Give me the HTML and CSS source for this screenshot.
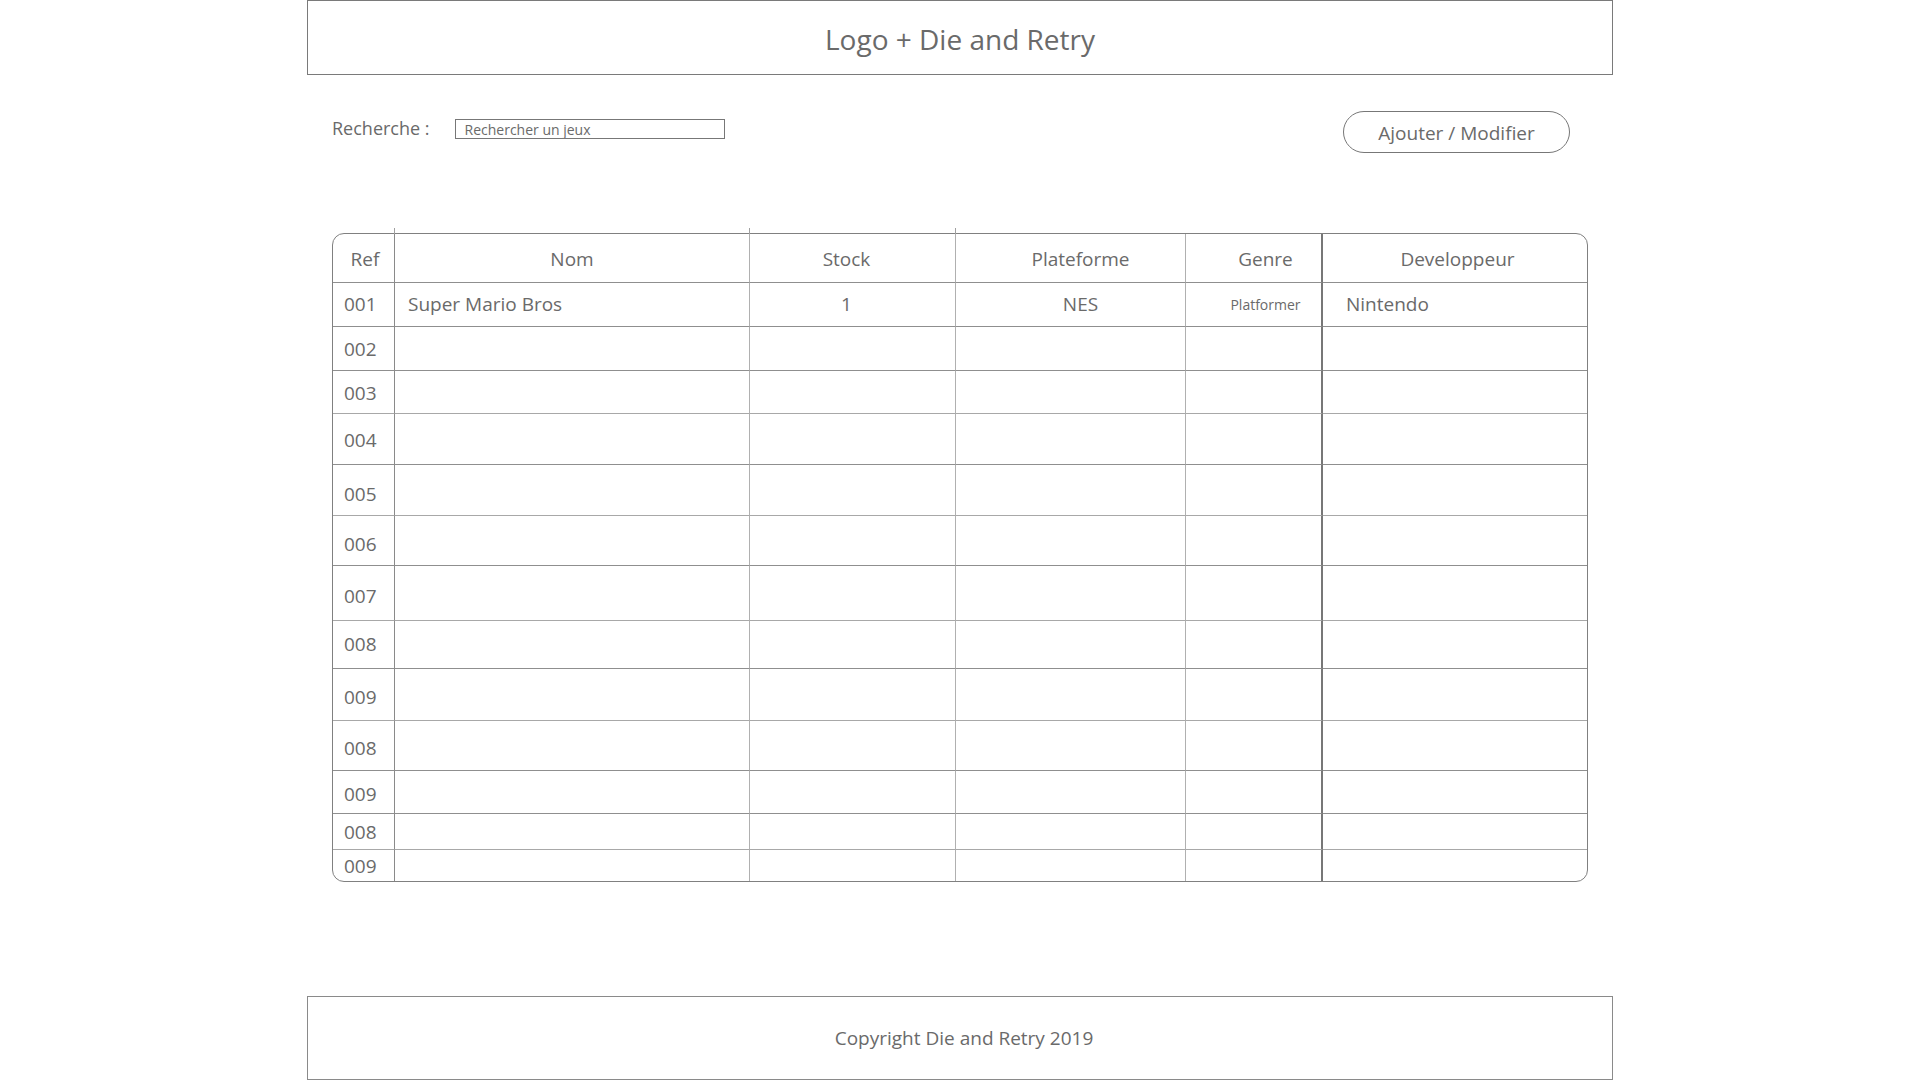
FILE: index.html
```html
<!DOCTYPE html>
<html lang="fr">
<head>
<meta charset="utf-8">
<title>Die and Retry</title>
<link rel="stylesheet" href="styles.css">
</head>
<body>
<div class="page">
  <header class="site-header">
    <h1 class="site-title">Logo + Die and Retry</h1>
  </header>

  <div class="toolbar">
    <div class="search">
      <label class="search-label" for="q">Recherche :</label>
      <input class="search-input" id="q" type="text" placeholder="Rechercher un jeux">
    </div>
    <button class="btn-edit" type="button">Ajouter / Modifier</button>
  </div>

  <div class="table-wrap">
    <table class="games">
      <colgroup>
        <col class="c-ref"><col class="c-nom"><col class="c-stock"><col class="c-plat"><col class="c-genre"><col class="c-dev">
      </colgroup>
      <thead>
        <tr>
          <th class="col-ref tick">Ref</th>
          <th class="col-nom tick">Nom</th>
          <th class="col-stock tick">Stock</th>
          <th class="col-plat">Plateforme</th>
          <th class="col-genre">Genre</th>
          <th class="col-dev">Developpeur</th>
        </tr>
      </thead>
      <tbody>
        <tr><td class="col-ref">001</td><td class="col-nom">Super Mario Bros</td><td class="col-stock">1</td><td class="col-plat">NES</td><td class="col-genre small">Platformer</td><td class="col-dev">Nintendo</td></tr>
        <tr><td class="col-ref">002</td><td class="col-nom"></td><td class="col-stock"></td><td class="col-plat"></td><td class="col-genre"></td><td class="col-dev"></td></tr>
        <tr class="light"><td class="col-ref">003</td><td class="col-nom"></td><td class="col-stock"></td><td class="col-plat"></td><td class="col-genre"></td><td class="col-dev"></td></tr>
        <tr><td class="col-ref">004</td><td class="col-nom"></td><td class="col-stock"></td><td class="col-plat"></td><td class="col-genre"></td><td class="col-dev"></td></tr>
        <tr class="light"><td class="col-ref">005</td><td class="col-nom"></td><td class="col-stock"></td><td class="col-plat"></td><td class="col-genre"></td><td class="col-dev"></td></tr>
        <tr><td class="col-ref">006</td><td class="col-nom"></td><td class="col-stock"></td><td class="col-plat"></td><td class="col-genre"></td><td class="col-dev"></td></tr>
        <tr class="light"><td class="col-ref">007</td><td class="col-nom"></td><td class="col-stock"></td><td class="col-plat"></td><td class="col-genre"></td><td class="col-dev"></td></tr>
        <tr><td class="col-ref">008</td><td class="col-nom"></td><td class="col-stock"></td><td class="col-plat"></td><td class="col-genre"></td><td class="col-dev"></td></tr>
        <tr class="light"><td class="col-ref">009</td><td class="col-nom"></td><td class="col-stock"></td><td class="col-plat"></td><td class="col-genre"></td><td class="col-dev"></td></tr>
        <tr><td class="col-ref">008</td><td class="col-nom"></td><td class="col-stock"></td><td class="col-plat"></td><td class="col-genre"></td><td class="col-dev"></td></tr>
        <tr><td class="col-ref">009</td><td class="col-nom"></td><td class="col-stock"></td><td class="col-plat"></td><td class="col-genre"></td><td class="col-dev"></td></tr>
        <tr class="light"><td class="col-ref">008</td><td class="col-nom"></td><td class="col-stock"></td><td class="col-plat"></td><td class="col-genre"></td><td class="col-dev"></td></tr>
        <tr><td class="col-ref">009</td><td class="col-nom"></td><td class="col-stock"></td><td class="col-plat"></td><td class="col-genre"></td><td class="col-dev"></td></tr>
      </tbody>
    </table>
  </div>

  <footer class="site-footer">Copyright Die and Retry 2019</footer>
</div>
</body>
</html>
```

FILE: styles.css
```css
* { box-sizing: border-box; }

html, body {
  margin: 0;
  padding: 0;
  background: #ffffff;
}

body {
  font-family: "Open Sans", "Noto Sans", "Liberation Sans", sans-serif;
  font-weight: 400;
  color: #6a6a6a;
}

.page {
  width: 1306px;
  margin: 0 auto;
}

/* Header */
.site-header {
  height: 75px;
  border: 1px solid #7a7a7a;
  display: flex;
  align-items: center;
  justify-content: center;
}

.site-title {
  margin: 0;
  font-size: 28px;
  font-weight: 400;
  color: #6a6a6a;
  line-height: 1;
  padding-top: 3px;
}

/* Toolbar */
.toolbar {
  margin-top: 36px;
  padding: 0 43px 0 25px;
  display: flex;
  justify-content: space-between;
  align-items: flex-start;
}

.search {
  margin-top: 8px;
  display: flex;
  align-items: center;
  gap: 25px;
}

.search-label {
  font-size: 18px;
  line-height: 20px;
  color: #6a6a6a;
  margin-top: -3px;
}

.search-input {
  width: 270px;
  height: 20px;
  margin: 0;
  padding: 0 9px;
  border: 1px solid #777777;
  border-radius: 0;
  font-family: inherit;
  font-weight: 400;
  font-size: 14px;
  line-height: 18px;
  color: #6a6a6a;
  outline: none;
  background: #fff;
}

.search-input::placeholder {
  color: #6a6a6a;
  opacity: 1;
}

.btn-edit {
  width: 227px;
  height: 42px;
  margin: 0;
  padding: 2px 0 0;
  border: 1px solid #777777;
  border-radius: 21px;
  background: #ffffff;
  font-family: inherit;
  font-weight: 400;
  font-size: 19px;
  color: #6a6a6a;
  cursor: pointer;
}

/* Table */
.table-wrap {
  margin: 80px 25px 0 25px;
  border: 1px solid #808080;
  border-radius: 12px;
}

.games {
  width: 100%;
  table-layout: fixed;
  border-collapse: separate;
  border-spacing: 0;
  font-size: 19px;
  color: #6a6a6a;
}

.c-ref { width: 62px; }
.c-nom { width: 355px; }
.c-stock { width: 206px; }
.c-plat { width: 230px; }
.c-genre { width: 137px; }
.c-dev { width: 264px; }

.games th,
.games td {
  padding: 0;
  font-weight: 400;
  border-bottom: 1px solid #8f8f8f;
  border-right: 1px solid #b0b0b0;
  white-space: nowrap;
  vertical-align: middle;
}

.games tr.light td { border-bottom-color: #a8a8a8; }

.games tbody tr:last-child td { border-bottom: none; }

.games .col-ref { border-right-color: #8a8a8a; }
.games .col-genre { border-right: 2px solid #777777; }
.games .col-dev { border-right: none; }

.games th {
  height: 49px;
  text-align: center;
  line-height: 1;
  padding-top: 3px;
}

.games th.tick { position: relative; }
.games th.tick::before {
  content: "";
  position: absolute;
  right: -1px;
  top: -6px;
  width: 1px;
  height: 6px;
  background: #a0a0a0;
}

.games td { line-height: 1; }

.games td.col-ref { padding-left: 11px; text-align: left; }
.games td.col-nom { padding-left: 13px; text-align: left; }
.games .col-stock { text-align: center; padding-right: 12px; }
.games .col-plat { text-align: center; padding-left: 20px; }
.games .col-genre { text-align: center; padding-left: 24px; }
.games td.col-dev { padding-left: 23px; text-align: left; }
.games th.col-dev { padding-left: 5px; }
.games th.col-ref { padding-left: 3px; }

.games td.small { font-size: 14px; }

.games tbody tr:nth-child(1) td { height: 44px; }
.games tbody tr:nth-child(2) td { height: 44px; padding-top: 2px; }
.games tbody tr:nth-child(3) td { height: 43px; padding-top: 2px; }
.games tbody tr:nth-child(4) td { height: 51px; padding-top: 3px; }
.games tbody tr:nth-child(5) td { height: 51px; padding-top: 8px; }
.games tbody tr:nth-child(6) td { height: 50px; padding-top: 7px; }
.games tbody tr:nth-child(7) td { height: 55px; padding-top: 6px; }
.games tbody tr:nth-child(8) td { height: 48px; }
.games tbody tr:nth-child(9) td { height: 52px; padding-top: 6px; }
.games tbody tr:nth-child(10) td { height: 50px; padding-top: 6px; }
.games tbody tr:nth-child(11) td { height: 43px; padding-top: 4px; }
.games tbody tr:nth-child(12) td { height: 36px; padding-top: 1px; }
.games tbody tr:nth-child(13) td { height: 31px; padding-top: 1px; }

/* Footer */
.site-footer {
  margin-top: 114px;
  height: 84px;
  border: 1px solid #8a8a8a;
  display: flex;
  align-items: center;
  justify-content: center;
  padding-left: 8px;
  font-size: 19px;
  color: #6a6a6a;
}
```
